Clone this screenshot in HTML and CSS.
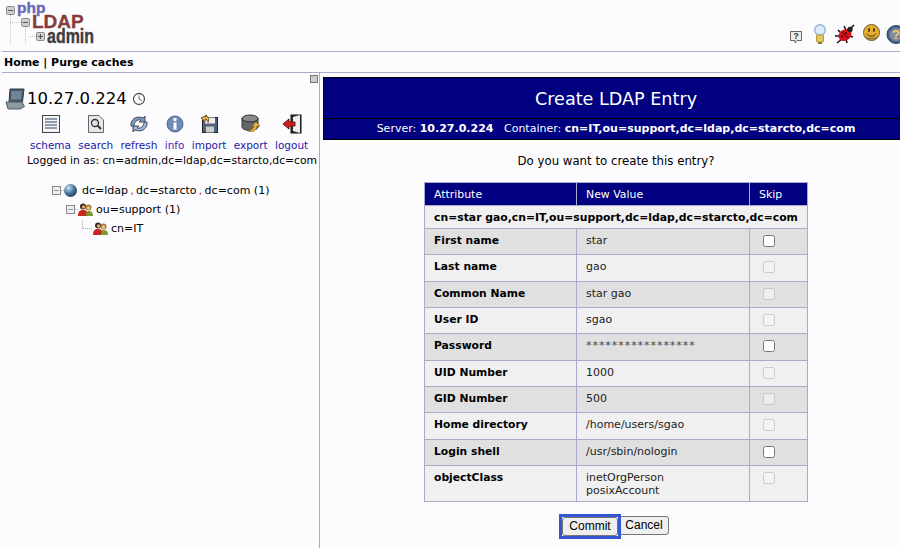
FILE: index.html
```html
<!DOCTYPE html>
<html lang="en">
<head>
<meta charset="utf-8">
<title>phpLDAPadmin</title>
<link rel="stylesheet" href="styles.css">
</head>
<body>
<header class="top">
  <div class="logo">
    <svg class="logo-tree" width="96" height="46" viewBox="0 0 96 46">
      <g fill="none" stroke="#c4c4c4" stroke-dasharray="1 1">
        <path d="M10.500 15V44M25.500 27V44M10 22.500H21M30 36.500H36"/>
      </g>
      <g fill="#cfcfcf" stroke="#8a8a8a">
        <rect x="6.500" y="6.500" width="8" height="8" rx="1"/>
        <rect x="21.500" y="18.500" width="8" height="8" rx="1"/>
        <rect x="36.500" y="32.500" width="8" height="8" rx="1"/>
      </g>
      <path d="M8 10.500H13M23 22.500H28M38 36.500H43M40.500 34V39" stroke="#555"/>
    </svg>
    <span class="logo-php">php</span>
    <span class="logo-ldap">LDAP</span>
    <span class="logo-admin">admin</span>
  </div>
  <div class="top-icons">
    <svg class="top-icon" width="14" height="14" viewBox="0 0 14 14"><path d="M1.500 1.500H12.500V10.500H8L6 13V10.500H1.500Z" fill="#eee" stroke="#666"/><text x="7" y="9" class="q-mark">?</text></svg>
    <svg class="top-icon icon-bulb" width="12" height="20" viewBox="0 0 12 20"><circle cx="6" cy="6" r="5.300" fill="#dfeaf8" stroke="#8fb0d8" stroke-width="1.400"/><rect x="2.500" y="11" width="7" height="7" rx="1" fill="#e4c95e" stroke="#b09a3c"/><path d="M4 19H8" stroke="#8a7a30" stroke-width="2"/></svg>
    <svg class="top-icon icon-bug" width="22" height="20" viewBox="0 0 22 20"><path d="M19 1 14 6M9 2l2 4M3 6l4 4M0 12h5M2 19l5-4M12 19l-1-4M18 13l-4-1" stroke="#111" stroke-width="1.500"/><ellipse cx="10" cy="11" rx="7" ry="5.500" fill="#d8101c" transform="rotate(-35 10 11)"/><circle cx="15" cy="5.500" r="2.700" fill="#222"/><path d="M7 8l6 6" stroke="#400"/><circle cx="7" cy="12.500" r="1.100" fill="#300"/><circle cx="11" cy="9" r="1.100" fill="#300"/></svg>
    <svg class="top-icon icon-smile" width="17" height="18" viewBox="0 0 17 18"><circle cx="8.500" cy="8.500" r="8" fill="#e5ae2c" stroke="#6d5a28"/><path d="M1 11c2 6 13 6 15 0-2 4-13 4-15 0Z" fill="#857345"/><ellipse cx="6" cy="6" rx="1" ry="2" fill="#432"/><ellipse cx="11" cy="6" rx="1" ry="2" fill="#432"/><path d="M4 9.500c1 3.500 8 3.500 9 0" fill="none" stroke="#432"/></svg>
    <svg class="top-icon icon-help" width="14" height="19" viewBox="0 0 14 19"><circle cx="10" cy="9.500" r="9" fill="#44658c" stroke="#2a3b50"/><circle cx="10" cy="9.500" r="6.500" fill="#7d8aa0"/><text x="10" y="14" class="q-big">?</text></svg>
  </div>
</header>
<nav class="nav"><a>Home</a> | <a>Purge caches</a></nav>
<div class="main">
  <aside class="side">
    <div class="side-toggle"><span class="toggle-box"></span></div>
    <div class="server">
      <svg width="20" height="22" viewBox="0 0 20 22"><path d="M5 1H19L17.500 14H4Z" fill="#4c5a68" stroke="#333c45"/><path d="M6.500 3H17L16 11.500H6Z" fill="#6f8496"/><path d="M1 14H17L19.500 18.500 15 21H3Z" fill="#8f99a1" stroke="#525c64"/></svg>
      <span class="server-name">10.27.0.224</span>
      <svg width="14" height="14" viewBox="0 0 14 14"><circle cx="7" cy="7" r="5.500" fill="#fff" stroke="#555" stroke-width="1.300"/><path d="M7 3.500V7L10 9" fill="none" stroke="#666"/></svg>
    </div>
    <ul class="tools">
      <li><svg width="20" height="20" viewBox="0 0 20 20"><rect x="1.500" y="1.500" width="17" height="17" fill="#f4f4f4" stroke="#444"/><path d="M4 5H16M4 8H16M4 11H16M4 14H16" stroke="#6c7f99" stroke-width="1.500"/></svg><a>schema</a></li>
      <li><svg width="18" height="20" viewBox="0 0 18 20"><path d="M1.500 1.500H12L16.500 6V18.500H1.500Z" fill="#e8e8e8" stroke="#666"/><circle cx="8" cy="9" r="3.500" fill="#d8e4ee" stroke="#333" stroke-width="1.300"/><path d="M10.500 11.500 14 15" stroke="#333" stroke-width="2"/></svg><a>search</a></li>
      <li><svg width="20" height="20" viewBox="0 0 20 20"><path d="M2 12C1 6 7 1 14 4L16 2V8H10L12 6C8 5 5 8 5 12Z" fill="#7f9bc0" stroke="#3e4c5e"/><path d="M18 8C19 14 13 19 6 16L4 18V12H10L8 14C12 15 15 12 15 8Z" fill="#9fb4d0" stroke="#3e4c5e"/></svg><a>refresh</a></li>
      <li><svg width="18" height="18" viewBox="0 0 18 18"><circle cx="9" cy="9" r="8" fill="#6e8db6" stroke="#4d6a92"/><circle cx="9" cy="4.500" r="1.700" fill="#fff"/><rect x="7.500" y="7.500" width="3" height="7" fill="#fff"/></svg><a class="visited">info</a></li>
      <li><svg width="20" height="20" viewBox="0 0 20 20"><rect x="3.500" y="3.500" width="15" height="15" fill="#51637a" stroke="#222"/><rect x="6" y="3.500" width="10" height="6" fill="#eee"/><rect x="7" y="12.500" width="8" height="6" fill="#ccc"/><path d="M8 1 2 4l4 4V5.500c2 0 3 1 3 3 2-4 0-7-3-6Z" fill="#e8b030" stroke="#654"/></svg><a>import</a></li>
      <li><svg width="20" height="20" viewBox="0 0 20 20"><ellipse cx="9" cy="4.500" rx="8" ry="3.500" fill="#8a8a8a" stroke="#333"/><path d="M1 4.500V13C1 15 5 16.500 9 16.500S17 15 17 13V4.500C17 6.500 13 8 9 8S1 6.500 1 4.500Z" fill="#666" stroke="#333"/><path d="M7 17c5 2 9-1 9-5h3l-4-4-4 4h2c0 2-2 4-6 5Z" fill="#e6b534" stroke="#7a5f1a" stroke-width=".6"/></svg><a>export</a></li>
      <li><svg width="20" height="20" viewBox="0 0 20 20"><rect x="9" y="1" width="10" height="18" fill="#24352a" stroke="#111"/><path d="M11 3 18 1V19L11 17Z" fill="#eee"/><path d="M1 10 7 5V8H13V12H7V15Z" fill="#cf1c1c" stroke="#701010"/></svg><a>logout</a></li>
    </ul>
    <div class="logged">Logged in as: cn=admin,dc=ldap,dc=starcto,dc=com</div>
    <ul class="tree">
      <li class="tree-root">
        <span class="expander"></span><i class="dots"></i>
        <svg width="13" height="13" viewBox="0 0 13 13"><defs><radialGradient id="g" cx=".35" cy=".3" r=".8"><stop offset="0" stop-color="#cfe0f0"/><stop offset=".55" stop-color="#44709c"/><stop offset="1" stop-color="#1e3550"/></radialGradient></defs><circle cx="6.500" cy="6.500" r="6.500" fill="url(#g)"/></svg>
        <span>dc=ldap<em>,</em>dc=starcto<em>,</em>dc=com (1)</span>
      </li>
      <li class="tree-ou">
        <span class="expander"></span><i class="dots"></i>
        <svg class="people" width="15" height="13" viewBox="0 0 15 13"><circle cx="5" cy="3.500" r="3" fill="#3f2a1e"/><circle cx="5.500" cy="4" r="1.700" fill="#d8a878"/><circle cx="10.500" cy="4.500" r="3" fill="#a87a30"/><circle cx="10.500" cy="5" r="1.700" fill="#e8c890"/><path d="M0 13c0-5 2-6 5-6s5 1 5 6Z" fill="#c8281e"/><path d="M8 13c0-4 1-5 3-5s4 1 4 5Z" fill="#7a9a30"/></svg>
        <span>ou=support (1)</span>
      </li>
      <li class="tree-cn">
        <i class="corner"></i>
        <svg class="people" width="15" height="13" viewBox="0 0 15 13"><circle cx="5" cy="3.500" r="3" fill="#3f2a1e"/><circle cx="5.500" cy="4" r="1.700" fill="#d8a878"/><circle cx="10.500" cy="4.500" r="3" fill="#a87a30"/><circle cx="10.500" cy="5" r="1.700" fill="#e8c890"/><path d="M0 13c0-5 2-6 5-6s5 1 5 6Z" fill="#c8281e"/><path d="M8 13c0-4 1-5 3-5s4 1 4 5Z" fill="#7a9a30"/></svg>
        <span>cn=IT</span>
      </li>
    </ul>
  </aside>
  <main class="content">
    <h1 class="title">Create LDAP Entry</h1>
    <div class="subtitle">Server: <b>10.27.0.224</b> &nbsp; Container: <b>cn=IT,ou=support,dc=ldap,dc=starcto,dc=com</b></div>
    <p class="question">Do you want to create this entry?</p>
    <table class="entry">
      <thead>
        <tr><th class="c1">Attribute</th><th class="c2">New Value</th><th class="c3">Skip</th></tr>
      </thead>
      <tbody>
        <tr class="dn"><td colspan="3">cn=star gao,cn=IT,ou=support,dc=ldap,dc=starcto,dc=com</td></tr>
        <tr class="dark"><td class="attr">First name</td><td>star</td><td class="skip"><input type="checkbox"></td></tr>
        <tr class="light"><td class="attr">Last name</td><td>gao</td><td class="skip"><input type="checkbox" disabled></td></tr>
        <tr class="dark"><td class="attr">Common Name</td><td>star gao</td><td class="skip"><input type="checkbox" disabled></td></tr>
        <tr class="light"><td class="attr">User ID</td><td>sgao</td><td class="skip"><input type="checkbox" disabled></td></tr>
        <tr class="dark"><td class="attr">Password</td><td class="stars">*****************</td><td class="skip"><input type="checkbox"></td></tr>
        <tr class="light"><td class="attr">UID Number</td><td>1000</td><td class="skip"><input type="checkbox" disabled></td></tr>
        <tr class="dark"><td class="attr">GID Number</td><td>500</td><td class="skip"><input type="checkbox" disabled></td></tr>
        <tr class="light"><td class="attr">Home directory</td><td>/home/users/sgao</td><td class="skip"><input type="checkbox" disabled></td></tr>
        <tr class="dark"><td class="attr">Login shell</td><td>/usr/sbin/nologin</td><td class="skip"><input type="checkbox"></td></tr>
        <tr class="light tall"><td class="attr">objectClass</td><td>inetOrgPerson<br>posixAccount</td><td class="skip"><input type="checkbox" disabled></td></tr>
      </tbody>
    </table>
    <div class="actions">
      <span class="focus-ring"><button class="btn btn-commit">Commit</button></span><button class="btn btn-cancel">Cancel</button>
    </div>
  </main>
</div>
</body>
</html>
```
FILE: styles.css
```css
html, body { margin: 0; padding: 0; }
body {
  width: 900px;
  height: 548px;
  overflow: hidden;
  background: #fcfcff;
  color: #000;
  font-family: "DejaVu Sans", Verdana, sans-serif;
  font-size: 11px;
}
.top {
  height: 51px;
  display: flex;
  justify-content: space-between;
}
.logo {
  position: relative;
  width: 100px;
  height: 51px;
}
.logo-tree { position: absolute; left: 0; top: 0; }
.logo span { position: absolute; font-family: "Liberation Sans", Arial, sans-serif; font-weight: 700; line-height: 1; transform-origin: left top; }
.logo-php { left: 17px; top: 0; font-size: 15.500px; color: #6a6ab4; -webkit-text-stroke: .4px #6a6ab4; }
.logo-ldap { left: 32px; top: 12px; font-size: 19px; color: #873c3c; -webkit-text-stroke: .3px #873c3c; }
.logo-admin { left: 47px; top: 25px; font-size: 21px; color: #3d3d3f; transform: scaleX(.76); -webkit-text-stroke: .4px #3d3d3f; }
.top-icons {
  display: flex;
  align-items: flex-end;
  padding-bottom: 7px;
}
.top-icon { flex: none; }
.icon-bulb { margin-left: 11px; }
.icon-bug { margin-left: 9px; }
.icon-smile { margin-left: 6px; margin-bottom: 2px; }
.icon-help { margin-left: 6px; }
.q-mark { font: 700 9px "Liberation Sans", sans-serif; text-anchor: middle; fill: #333; }
.q-big { font: 700 13px "Liberation Sans", sans-serif; text-anchor: middle; fill: #f0d060; }
.nav {
  height: 22px;
  box-sizing: border-box;
  border-top: 1px solid #aaaacc;
  border-bottom: 1px solid #aaaacc;
  margin-left: 2px;
  padding: 3px 0 0 2px;
  font-weight: 700;
  font-size: 10.950px;
  line-height: 15px;
}
.main { display: flex; height: 475px; }
.side {
  width: 320px;
  flex: none;
  box-sizing: border-box;
  border-right: 1px solid #aaaacc;
}
.side-toggle { display: flex; justify-content: flex-end; padding: 2px 1px 0 0; height: 10px; }
.toggle-box { width: 6px; height: 6px; background: #ccc; border: 1px solid #777; }
.server { display: flex; align-items: center; margin: 3px 0 0 5px; height: 22px; }
.server-name { font-size: 16.500px; line-height: 22px; margin: 0 5px 0 2px; }
.tools {
  list-style: none;
  margin: 4px 0 0;
  padding: 0 0 0 30px;
  display: flex;
  gap: 7.300px;
}
.tools li { display: flex; flex-direction: column; align-items: center; gap: 4px; font-size: 10.500px; }
.tools svg { height: 20px; }
.tools a { color: #1a1aa8; line-height: 14px; }
.tools a.visited { color: #5a1ab0; }
.logged { margin: 2px 0 0 27px; line-height: 14px; white-space: nowrap; font-size: 10.770px; }
.tree { list-style: none; margin: 13px 0 0; padding: 0; font-size: 11px; }
.tree li { display: flex; align-items: center; height: 19px; white-space: pre; }
.tree em { color: #d03030; font-style: normal; padding: 0 2.300px; }
.tree-root { padding-left: 52px; }
.tree-ou { padding-left: 66px; }
.tree-cn { padding-left: 82px; }
.expander {
  width: 7px; height: 7px;
  border: 1px solid #888;
  background: linear-gradient(#999,#999) center/5px 1px no-repeat, #eee;
}
.dots { width: 3px; border-top: 1px dotted #aaa; }
.corner { width: 9px; height: 8px; margin: -8px 1px 0 0; border-left: 1px dotted #aaa; border-bottom: 1px dotted #aaa; }
.tree svg { margin-right: 5px; }
.tree .people { margin-right: 3px; }
.content { flex: none; width: 586px; padding: 4px 0 0 3px; }
.title {
  margin: 0;
  height: 42px;
  box-sizing: border-box;
  border: 1px solid #000;
  background: #000080;
  color: #fff;
  font-size: 17.600px;
  font-weight: 400;
  text-align: center;
  line-height: 42px;
}
.subtitle {
  height: 21px;
  box-sizing: border-box;
  border: 1px solid #000;
  border-top: 0;
  background: #000080;
  color: #fff;
  text-align: center;
  line-height: 20px;
  font-size: 11px;
}
.question { margin: 0; padding-top: 14px; height: 42px; box-sizing: border-box; text-align: center; font-size: 11.750px; line-height: 15px; }
.entry {
  border-collapse: collapse;
  margin-left: 101px;
  width: 383px;
  table-layout: fixed;
  font-size: 11px;
}
.entry th, .entry td { border: 1px solid #aaaacc; padding: 0 0 0 9px; text-align: left; }
.entry th { background: #000080; color: #fff; font-weight: 400; height: 23px; line-height: 14px; font-size: 10.900px; padding-top: 1px; box-sizing: border-box; }
.c1 { width: 152px; }
.c2 { width: 173px; }
.c3 { width: 58px; }
.dn td { font-weight: 700; background: #f0f0f0; height: 23px; font-size: 10.830px; padding-top: 1px; box-sizing: border-box; }
.dark td { background: #e0e0e0; }
.light td { background: #f0f0f0; }
.dark td, .light td { vertical-align: top; padding-top: 5px; line-height: 13px; box-sizing: border-box; height: 26.330px; color: #222; }
.entry .attr { font-weight: 700; color: #000; font-size: 10.750px; }
.entry .stars { letter-spacing: .95px; color: #444; }
.tall td { height: 36px; }
.entry .skip { padding: 6px 0 0 13px; }
.skip input { display: block; margin: 0; width: 12px; height: 12px; }
.actions { display: flex; align-items: flex-start; margin: 12px 0 0 236px; }
.btn {
  font: 12px "Liberation Sans", Arial, sans-serif;
  height: 19px;
  padding: 0;
  background: #efefef;
  border: 1px solid #767676;
  border-radius: 3px;
  color: #000;
}
.focus-ring { position: relative; z-index: 1; display: flex; border: 3px solid #3657cf; }
.btn-commit { width: 56px; }
.btn-cancel { width: 50px; margin: 2px 0 0 -2px; }
```
